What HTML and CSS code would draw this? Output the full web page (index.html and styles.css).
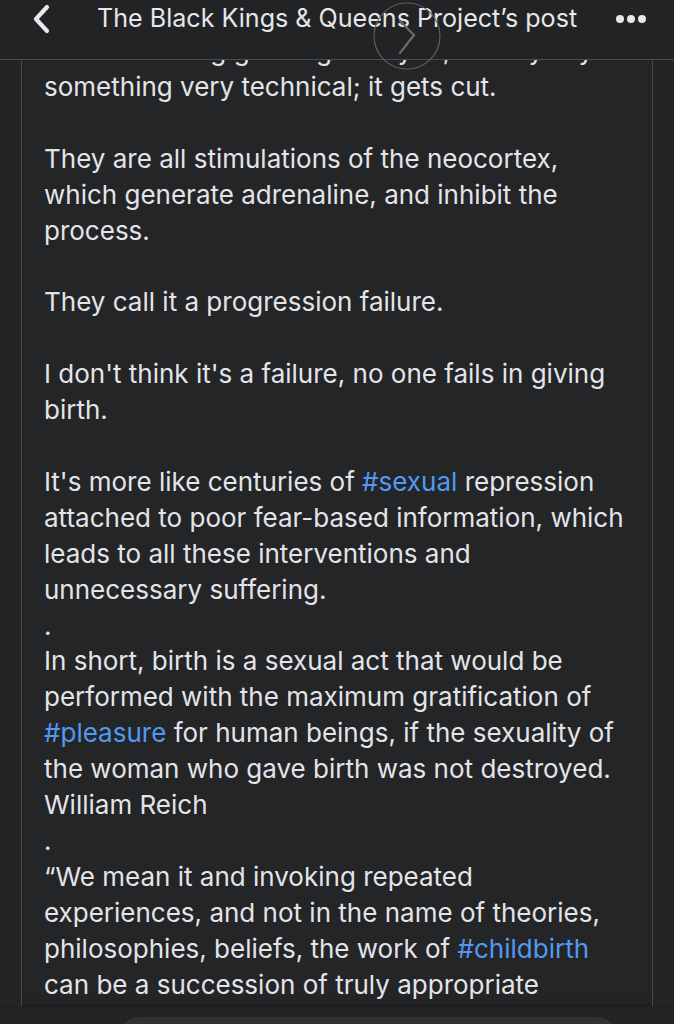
FILE: index.html
```html
<!DOCTYPE html>
<html>
<head>
<meta charset="utf-8">
<link rel="stylesheet" href="styles.css">
</head>
<body>
<div class="page">
  <header class="header">
    <svg class="back" width="20" height="30" viewBox="0 0 20 30"><path d="M15 3 L4 15 L15 27" fill="none" stroke="#e8e9ec" stroke-width="4.2" stroke-linecap="round" stroke-linejoin="round"/></svg>
    <div class="title">The Black Kings &amp; Queens Project’s post</div>
    <div class="dots"><span></span><span></span><span></span></div>
    <svg class="next-overlay" width="70" height="70" viewBox="0 0 70 70"><circle cx="35" cy="35" r="33" fill="none" stroke="#5c5d60" stroke-width="1.2"/><path d="M28 20 L42 34 L28 52" fill="none" stroke="#6a6b6e" stroke-width="2.2" stroke-linecap="round"/></svg>
  </header>
  <main class="feed">
    <div class="panel">
      <div class="text">
        <p>when the thing goes against you, or they say</p>
        <p>something very technical; it gets cut.</p>
        <p class="gap"></p>
        <p>They are all stimulations of the neocortex,</p>
        <p>which generate adrenaline, and inhibit the</p>
        <p>process.</p>
        <p class="gap"></p>
        <p>They call it a progression failure.</p>
        <p class="gap"></p>
        <p>I don't think it's a failure, no one fails in giving</p>
        <p>birth.</p>
        <p class="gap"></p>
        <p>It's more like centuries of <span class="tag">#sexual</span> repression</p>
        <p>attached to poor fear-based information, which</p>
        <p>leads to all these interventions and</p>
        <p>unnecessary suffering.</p>
        <p class="dot">.</p>
        <p>In short, birth is a sexual act that would be</p>
        <p>performed with the maximum gratification of</p>
        <p><span class="tag">#pleasure</span> for human beings, if the sexuality of</p>
        <p>the woman who gave birth was not destroyed.</p>
        <p>William Reich</p>
        <p class="dot">.</p>
        <p>“We mean it and invoking repeated</p>
        <p>experiences, and not in the name of theories,</p>
        <p>philosophies, beliefs, the work of <span class="tag">#childbirth</span></p>
        <p>can be a succession of truly appropriate</p>
      </div>
    </div>
  </main>
  <footer class="bottom">
    <div class="pill"></div>
  </footer>
</div>
</body>
</html>
```

FILE: styles.css
```css
* { box-sizing: border-box; }
html, body { margin: 0; padding: 0; }
body {
  background: #232426;
  font-family: Inter, "Noto Sans", sans-serif;
  color: #e3e4e8;
  overflow: hidden;
}
.page {
  width: 674px;
  height: 1024px;
  display: flex;
  flex-direction: column;
  overflow: hidden;
}
.header {
  position: relative;
  height: 60px;
  flex: none;
  display: flex;
  align-items: flex-start;
  padding: 3px 0 0 32px;
  border-bottom: 1px solid #4a4b4e;
  background: #222325;
}
.back { flex: none; margin-top: 1px; }
.title {
  margin-left: 45px;
  font-size: 25.1px;
  line-height: 30px;
  color: #e6e7ea;
  white-space: nowrap;
}
.dots {
  margin-left: auto;
  margin-right: 28px;
  margin-top: 12px;
  display: flex;
  gap: 3px;
}
.dots span {
  width: 8px;
  height: 8px;
  border-radius: 50%;
  background: #e6e7ea;
}
.next-overlay {
  position: absolute;
  left: 372px;
  top: 1px;
}
.feed {
  flex: 1;
  padding: 0 21px;
  overflow: hidden;
  display: flex;
  flex-direction: column;
}
.panel {
  flex: 1;
  border-left: 1px solid #47484b;
  border-right: 1px solid #47484b;
  background: #242527;
  overflow: hidden;
  padding-left: 22px;
  box-shadow: inset 0 -6px 6px -4px #1b1c1d;
}
.text { margin-top: -27px; }
.text p {
  margin: 0;
  font-size: 26px;
  line-height: 35.92px;
  height: 35.92px;
  white-space: nowrap;
}
.tag { color: #5299f2; }
.bottom {
  height: 18px;
  flex: none;
  background: #222325;
  border-top: 1px solid #1c1d1e;
  padding: 10px 58px 0 120px;
}
.pill {
  height: 30px;
  background: #313234;
  border-radius: 18px 18px 0 0;
}
```
